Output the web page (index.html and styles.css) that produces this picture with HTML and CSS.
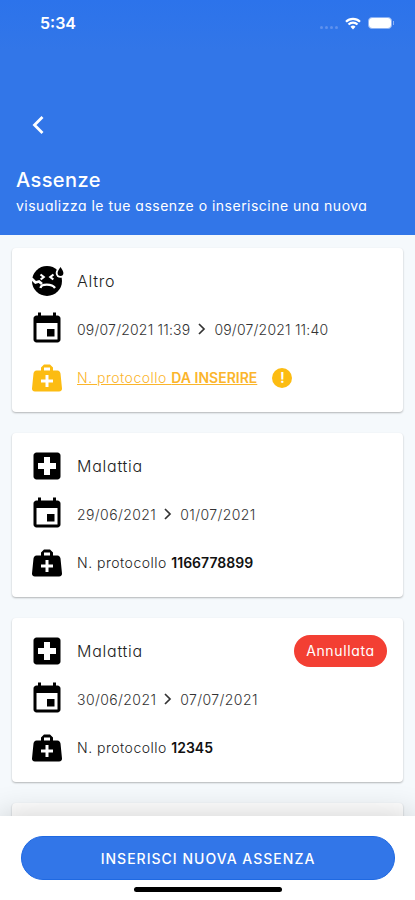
FILE: index.html
```
<!DOCTYPE html>
<html lang="it">
<head>
    <meta charset="UTF-8">
    <meta name="viewport" content="width=device-width, initial-scale=1.0">
    <title>Assenze</title>
    <link rel="stylesheet" href="styles.css">
</head>
<body>

<!-- Shared icons -->
<svg class="icon-defs" width="0" height="0">
    <symbol id="calendar" viewBox="0 0 24 24">
        <path d="M17 12h-5v5h5v-5zM16 1v2H8V1H6v2H5c-1.1 0-2 .9-2 2v14c0 1.1.9 2 2 2h14c1.1 0 2-.9 2-2V5c0-1.1-.9-2-2-2h-1V1h-2zm3 18H5V8h14v11z"/>
    </symbol>
    <symbol id="hospital" viewBox="0 0 24 24">
        <path d="M19 3H5c-1.1 0-2 .9-2 2v14c0 1.1.9 2 2 2h14c1.1 0 2-.9 2-2V5c0-1.1-.9-2-2-2zm-1 11h-4v4h-4v-4H6v-4h4V6h4v4h4v4z"/>
    </symbol>
    <symbol id="bag" viewBox="0 0 24 24">
        <path d="M10 3L8 5V7H5C3.85 7 3.12 8 3 9L2 19C1.88 20 2.54 21 4 21H20C21.46 21 22.12 20 22 19L21 9C20.88 8 20.06 7 19 7H16V5L14 3H10M10 5H14V7H10V5M11 10H13V13H16V15H13V18H11V15H8V13H11V10Z"/>
    </symbol>
    <symbol id="sick" viewBox="0 0 36 36">
        <circle cx="18" cy="18" r="15"/>
        <circle cx="31.500" cy="10" r="4.800" fill="#fff"/>
        <path d="M31.500 4c1.600 2.600 2.900 4.300 2.900 6a2.900 2.900 0 0 1-5.800 0c0-1.700 1.300-3.400 2.900-6z"/>
        <path d="M11.500 11.500l3.200 2.500-3 2.500M24.500 11.500l-3.200 2.500 3 2.500" fill="none" stroke="#fff" stroke-width="2.200"/>
        <path d="M2.500 15.500L6.500 19.500l3.500-1 3 2.500" fill="none" stroke="#fff" stroke-width="2.800"/>
        <path d="M11.500 25c.5-4.500 11.500-4.500 14.500 0" fill="none" stroke="#fff" stroke-width="2.300"/>
    </symbol>
    <symbol id="chevron" viewBox="0 0 12 14">
        <path d="M3 2l5 5-5 5" fill="none" stroke="currentColor" stroke-width="1.700"/>
    </symbol>
</svg>

<div class="app">
    <header class="header">
        <div class="status-bar">
            <span class="time">5:34</span>
            <div class="status-icons">
                <div class="signal"><i></i><i></i><i></i><i></i></div>
                <svg class="wifi" viewBox="0 0 16 12">
                    <path d="M1 4.300a10 10 0 0 1 14 0M3.500 7a6.400 6.400 0 0 1 9 0" fill="none" stroke="#fff" stroke-width="2.200"/>
                    <path d="M5.500 9.200a3.600 3.600 0 0 1 5 0L8 11.900z" fill="#fff"/>
                </svg>
                <div class="battery"></div>
                <div class="battery-tip"></div>
            </div>
        </div>
        <svg class="back" viewBox="0 0 14 20">
            <path d="M11.500 2L3.500 10l8 8" fill="none" stroke="#fff" stroke-width="2.800"/>
        </svg>
        <h1>Assenze</h1>
        <p>visualizza le tue assenze o inseriscine una nuova</p>
    </header>

    <main class="list">
        <div class="card">
            <div class="row">
                <svg class="icon"><use href="#sick"/></svg>
                <span class="kind">Altro</span>
            </div>
            <div class="row">
                <svg class="icon"><use href="#calendar"/></svg>
                <span class="date long">09/07/2021 11:39</span>
                <svg class="arrow"><use href="#chevron"/></svg>
                <span class="date long">09/07/2021 11:40</span>
            </div>
            <div class="row missing">
                <svg class="icon"><use href="#bag"/></svg>
                <a class="protocol"><span class="label">N. protocollo </span><b>DA INSERIRE</b></a>
                <span class="alert">!</span>
            </div>
        </div>

        <div class="card">
            <div class="row">
                <svg class="icon"><use href="#hospital"/></svg>
                <span class="kind">Malattia</span>
            </div>
            <div class="row">
                <svg class="icon"><use href="#calendar"/></svg>
                <span class="date">29/06/2021</span>
                <svg class="arrow"><use href="#chevron"/></svg>
                <span class="date">01/07/2021</span>
            </div>
            <div class="row">
                <svg class="icon"><use href="#bag"/></svg>
                <span class="protocol"><span class="label">N. protocollo </span><b>1166778899</b></span>
            </div>
        </div>

        <div class="card">
            <div class="row">
                <svg class="icon"><use href="#hospital"/></svg>
                <span class="kind">Malattia</span>
                <span class="badge">Annullata</span>
            </div>
            <div class="row">
                <svg class="icon"><use href="#calendar"/></svg>
                <span class="date">30/06/2021</span>
                <svg class="arrow"><use href="#chevron"/></svg>
                <span class="date">07/07/2021</span>
            </div>
            <div class="row">
                <svg class="icon"><use href="#bag"/></svg>
                <span class="protocol"><span class="label">N. protocollo </span><b>12345</b></span>
            </div>
        </div>

        <div class="card"></div>
    </main>

    <footer class="footer">
        <button class="new-btn">INSERISCI NUOVA ASSENZA</button>
        <div class="home-bar"></div>
    </footer>
</div>

</body>
</html>
```
FILE: styles.css
```
* {
    box-sizing: border-box;
}
body {
    margin: 0;
    font-family: Inter, "Open Sans", sans-serif;
    font-feature-settings: "cv11";
    color: #222;
}
.icon-defs {
    display: block;
}
.app {
    display: flex;
    flex-direction: column;
    height: 900px;
    width: 415px;
    overflow: hidden;
    background: #f5f9fc;
}
.header {
    flex: none;
    height: 235px;
    background: linear-gradient(#2c73eb, #3276e8 50px);
    color: white;
}
.status-bar {
    display: flex;
    justify-content: space-between;
    align-items: center;
    height: 46px;
    padding: 0 21px 0 40px;
}
.time {
    font-size: 16px;
    font-weight: 600;
}
.status-icons {
    display: flex;
    align-items: center;
}
.signal {
    display: flex;
    gap: 2px;
    margin: 8px 7px 0 0;
}
.signal i {
    width: 3px;
    height: 3px;
    border-radius: 50%;
    background: #5f92ee;
}
.wifi {
    width: 16px;
    height: 13px;
    margin-right: 7px;
}
.battery {
    width: 24px;
    height: 12px;
    border: 1.5px solid #8db2f3;
    border-radius: 4px;
    background: white;
}
.battery-tip {
    width: 1px;
    height: 4px;
    margin-left: 1px;
    background: #8db2f3;
}
.back {
    display: block;
    width: 14px;
    height: 20px;
    margin: 69px 0 0 31px;
}
.header h1 {
    margin: 32px 0 0 16px;
    font-size: 20px;
    line-height: 26px;
    font-weight: 500;
    letter-spacing: 0.4px;
}
.header p {
    margin: 3px 0 0 16px;
    font-size: 14px;
    line-height: 20px;
    letter-spacing: 0.49px;
    white-space: nowrap;
}
.list {
    flex: 1;
    display: flex;
    flex-direction: column;
    gap: 21px;
    min-height: 0;
    padding: 13px 12px 0;
    overflow: hidden;
}
.card {
    flex: none;
    display: flex;
    flex-direction: column;
    gap: 12.3px;
    height: 164px;
    padding: 15px 16px 0 16.5px;
    background: white;
    border-radius: 4px;
    box-shadow: 0 1px 2px rgba(0, 0, 0, 0.28);
}
.row {
    display: flex;
    align-items: center;
    height: 36px;
    white-space: nowrap;
}
.icon {
    width: 36px;
    height: 36px;
    margin-right: 12.5px;
    fill: black;
}
.kind {
    font-size: 16px;
    font-weight: 300;
    letter-spacing: 0.75px;
}
.date {
    font-size: 14px;
    font-weight: 300;
    letter-spacing: 0.4px;
    color: #333;
}
.date.long {
    letter-spacing: 0.2px;
}
.arrow {
    width: 12px;
    height: 14px;
    margin: 0 6px;
    color: #333;
}
.protocol {
    font-size: 14px;
}
.label {
    font-weight: 300;
    letter-spacing: 0.5px;
}
.protocol b {
    font-weight: 600;
    color: #111;
}
.missing .icon {
    fill: #fcbc12;
}
.missing .protocol, .missing b {
    color: #fbb52b;
}
.missing .protocol {
    text-decoration: underline;
}
.alert {
    width: 20px;
    height: 20px;
    margin-left: 15px;
    border-radius: 50%;
    background: #fcbc12;
    color: white;
    font-size: 15px;
    font-weight: 600;
    line-height: 20px;
    text-align: center;
}
.badge {
    width: 93px;
    height: 32px;
    margin-left: auto;
    border-radius: 16px;
    background: #f33f33;
    color: white;
    font-size: 14px;
    letter-spacing: 0.65px;
    line-height: 32px;
    text-align: center;
}
.footer {
    flex: none;
    height: 84px;
    padding: 20px 20px 0 21px;
    background: white;
    box-shadow: 0 0 32px rgba(0, 0, 0, 0.2);
}
.new-btn {
    display: block;
    width: 100%;
    height: 44px;
    border: 1px solid #1f69e2;
    border-radius: 22px;
    background: #3276e8;
    color: white;
    font: 500 14px Inter, sans-serif;
    letter-spacing: 1.02px;
}
.home-bar {
    width: 148px;
    height: 5px;
    margin: 7px auto 0;
    border-radius: 3px;
    background: black;
}
```
